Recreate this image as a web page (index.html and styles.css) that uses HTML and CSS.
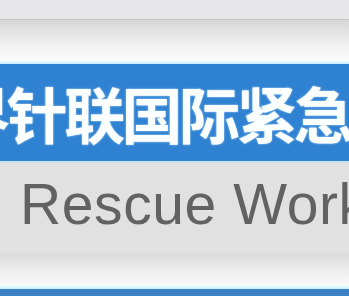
FILE: index.html
```html
<!DOCTYPE html>
<html lang="zh">
<head>
<meta charset="utf-8">
<link rel="stylesheet" href="styles.css">
</head>
<body>
<div class="page">
  <div class="top"></div>
  <div class="rule"></div>
  <div class="fade"></div>
  <div class="glow"></div>
  <div class="banner"><span class="cn">世界针联国际紧急救援</span></div>
  <div class="glow2"></div>
  <div class="subband"><span class="en">Rescue Work</span></div>
  <div class="fade2"></div>
  <div class="glow"></div>
  <div class="banner2"></div>
</div>
</body>
</html>
```
FILE: styles.css
```css
html, body { margin: 0; padding: 0; }
body { width: 349px; height: 296px; overflow: hidden; background: #e7e7eb; }
.page { display: flex; flex-direction: column; width: 349px; }
.top { height: 19px; background: #e7e7eb; }
.rule { height: 1px; background: #c4c4c6; }
.fade { height: 41px; background: linear-gradient(#d7d7d8, #e6e6e6 35%, #f7f7f7 80%, #fbfbfb); }
.glow { height: 3px; background: linear-gradient(#e4fbff, #c7eefa); }
.banner {
  height: 97px; background: #2f81d2;
  display: flex; align-items: center; overflow: hidden; white-space: nowrap;
}
.cn {
  font-family: "Noto Sans CJK SC", sans-serif; font-weight: 700; font-size: 61px;
  letter-spacing: -3.6px;
  color: #fbffff; margin-left: -108px; line-height: 1;
  text-shadow: 0 0 2px #cfeaff;
}
.glow2 { height: 2px; background: #c9e2f2; }
.subband {
  height: 90px; background: #e1e1e1;
  display: flex; align-items: center; overflow: hidden; white-space: nowrap;
}
.en {
  font-family: "Liberation Sans", Arial, sans-serif; font-size: 57px; color: #626262;
  margin-left: 20px; letter-spacing: 0.6px; line-height: 1; margin-bottom: 7px;
}
.fade2 { height: 33px; background: linear-gradient(#dbdbdb, #e9e9e9 40%, #f6f6f6 85%, #fafafa); }
.banner2 { height: 10px; background: #3a80c2; }
```
